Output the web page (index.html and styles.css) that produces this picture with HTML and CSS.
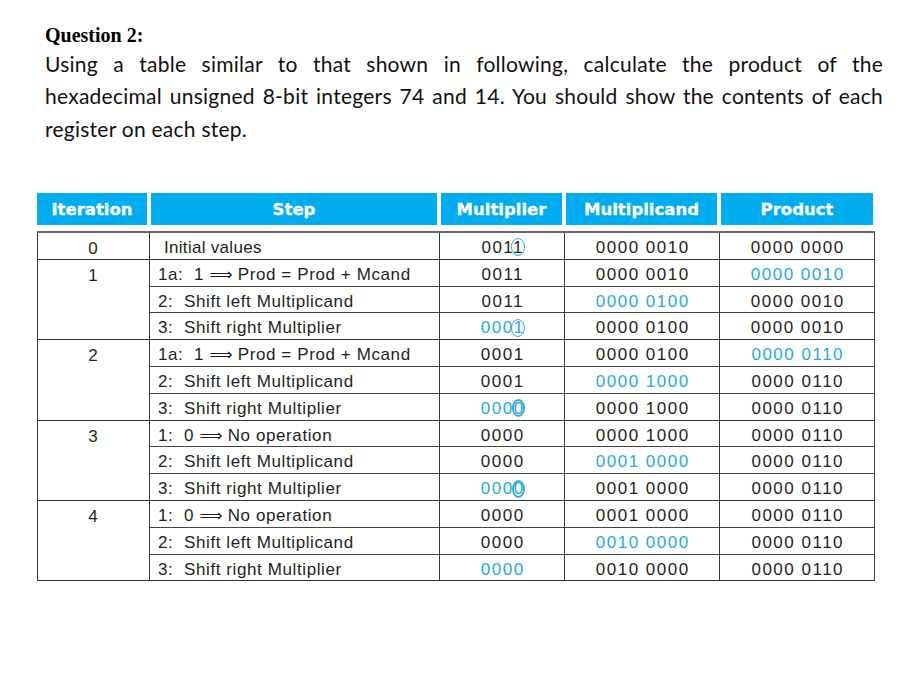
FILE: index.html
```html
<!DOCTYPE html>
<html lang="en">
<head>
<meta charset="utf-8">
<title>Question 2</title>
<link rel="stylesheet" href="styles.css">
</head>
<body>
<section class="question">
  <h2 class="q-title">Question 2:</h2>
  <p class="q-text">
    <span class="line">Using a table similar to that shown in following, calculate the product of the</span>
    <span class="line">hexadecimal unsigned 8-bit integers 74 and 14. You should show the contents of each</span>
    <span class="line line-last">register on each step.</span>
  </p>
</section>

<section class="sheet">
  <div class="head">
    <div class="hcell">Iteration</div>
    <div class="hcell">Step</div>
    <div class="hcell">Multiplier</div>
    <div class="hcell">Multiplicand</div>
    <div class="hcell">Product</div>
  </div>
  <table class="grid">
    <colgroup>
      <col class="c-it"><col class="c-step"><col class="c-mp"><col class="c-mc"><col class="c-pr">
    </colgroup>
    <tbody class="group">
      <tr>
        <td class="it">0</td>
        <td class="step step-init">Initial values</td>
        <td class="num">001<span class="ring">1</span></td>
        <td class="num">0000 0010</td>
        <td class="num">0000 0000</td>
      </tr>
    </tbody>
    <tbody class="group">
      <tr>
        <td class="it" rowspan="3">1</td>
        <td class="step">1a:&nbsp; 1 <span class="arr">⟹</span> Prod = Prod + Mcand</td>
        <td class="num">0011</td>
        <td class="num">0000 0010</td>
        <td class="num hi">0000 0010</td>
      </tr>
      <tr class="sub">
        <td class="step">2:&nbsp; Shift left Multiplicand</td>
        <td class="num">0011</td>
        <td class="num hi">0000 0100</td>
        <td class="num">0000 0010</td>
      </tr>
      <tr class="sub">
        <td class="step">3:&nbsp; Shift right Multiplier</td>
        <td class="num hi">000<span class="ring">1</span></td>
        <td class="num">0000 0100</td>
        <td class="num">0000 0010</td>
      </tr>
    </tbody>
    <tbody class="group">
      <tr>
        <td class="it" rowspan="3">2</td>
        <td class="step">1a:&nbsp; 1 <span class="arr">⟹</span> Prod = Prod + Mcand</td>
        <td class="num">0001</td>
        <td class="num">0000 0100</td>
        <td class="num hi">0000 0110</td>
      </tr>
      <tr class="sub">
        <td class="step">2:&nbsp; Shift left Multiplicand</td>
        <td class="num">0001</td>
        <td class="num hi">0000 1000</td>
        <td class="num">0000 0110</td>
      </tr>
      <tr class="sub">
        <td class="step">3:&nbsp; Shift right Multiplier</td>
        <td class="num hi">000<span class="ring ring-zero">0</span></td>
        <td class="num">0000 1000</td>
        <td class="num">0000 0110</td>
      </tr>
    </tbody>
    <tbody class="group">
      <tr>
        <td class="it" rowspan="3">3</td>
        <td class="step">1:&nbsp; 0 <span class="arr">⟹</span> No operation</td>
        <td class="num">0000</td>
        <td class="num">0000 1000</td>
        <td class="num">0000 0110</td>
      </tr>
      <tr class="sub">
        <td class="step">2:&nbsp; Shift left Multiplicand</td>
        <td class="num">0000</td>
        <td class="num hi">0001 0000</td>
        <td class="num">0000 0110</td>
      </tr>
      <tr class="sub">
        <td class="step">3:&nbsp; Shift right Multiplier</td>
        <td class="num hi">000<span class="ring ring-zero">0</span></td>
        <td class="num">0001 0000</td>
        <td class="num">0000 0110</td>
      </tr>
    </tbody>
    <tbody class="group">
      <tr>
        <td class="it" rowspan="3">4</td>
        <td class="step">1:&nbsp; 0 <span class="arr">⟹</span> No operation</td>
        <td class="num">0000</td>
        <td class="num">0001 0000</td>
        <td class="num">0000 0110</td>
      </tr>
      <tr class="sub">
        <td class="step">2:&nbsp; Shift left Multiplicand</td>
        <td class="num">0000</td>
        <td class="num hi">0010 0000</td>
        <td class="num">0000 0110</td>
      </tr>
      <tr class="sub">
        <td class="step">3:&nbsp; Shift right Multiplier</td>
        <td class="num hi">0000</td>
        <td class="num">0010 0000</td>
        <td class="num">0000 0110</td>
      </tr>
    </tbody>
  </table>
</section>
</body>
</html>
```

FILE: styles.css
```css
html, body {
  margin: 0;
  padding: 0;
  background: #ffffff;
}

body {
  width: 917px;
  color: #1a1a1a;
}

.question {
  width: 838px;
  padding: 24px 0 0 45px;
}

.q-title {
  margin: 0;
  font-family: "Liberation Serif", "Times New Roman", serif;
  font-weight: bold;
  font-size: 20px;
  line-height: 22px;
  color: #000;
}

.q-text {
  margin: 2px 0 0 0;
  font-family: Lato, "Open Sans", sans-serif;
  font-size: 21px;
  letter-spacing: 0.25px;
  word-spacing: -1px;
  line-height: 32.3px;
  color: #111;
}

.line {
  display: block;
  text-align: justify;
  text-align-last: justify;
}

.line-last {
  text-align-last: left;
  word-spacing: 0;
}

.sheet {
  width: 837px;
  margin: 48px 0 0 37px;
}

.head {
  display: grid;
  grid-template-columns: 112px 290px 125px 155px 155px;
  height: 32px;
  margin-bottom: 6px;
}

.hcell {
  margin: 0 2px;
  padding-top: 2px;
  background: #00adef;
  color: #ffffff;
  font-family: "DejaVu Sans", Verdana, sans-serif;
  font-weight: bold;
  font-size: 16.5px;
  -webkit-text-stroke: 0.3px #ffffff;
  display: flex;
  align-items: center;
  justify-content: center;
}

.hcell:first-child {
  margin-left: 0;
}

.hcell:last-child {
  margin-right: 1px;
}

.grid {
  width: 837px;
  table-layout: fixed;
  border-collapse: collapse;
  border-top: 2px solid #666;
  border-bottom: 1.5px solid #333;
  border-left: 1.5px solid #333;
  border-right: 1.5px solid #444;
}

.c-it { width: 112px; }
.c-step { width: 290px; }
.c-mp { width: 125px; }
.c-mc { width: 155px; }
.c-pr { width: 155px; }

.group + .group tr:first-child td {
  border-top: 1.5px solid #333;
}

.sub td {
  border-top: 1px solid #444;
}

.grid tr {
  height: 26.8px;
}

.grid td {
  padding: 4px 0 0 0;
  border-left: 1.5px solid #3a3a3a;
  font-family: "Liberation Sans", Arial, sans-serif;
  font-size: 17px;
  line-height: 20px;
  color: #231f20;
  vertical-align: middle;
}

.grid td.it {
  text-align: center;
  vertical-align: top;
  padding-top: 6px;
  border-left: 0;
  letter-spacing: 1px;
}

.grid td.step {
  padding-left: 8px;
  letter-spacing: 0.6px;
}

.grid td.step-init {
  padding-left: 14px;
  letter-spacing: 0.3px;
}

.arr {
  font-family: "DejaVu Sans", sans-serif;
  font-size: 16px;
  letter-spacing: 0;
}

.grid td.num {
  text-align: center;
  letter-spacing: 1.5px;
  padding-left: 1.5px;
}

.grid td.hi {
  color: #25a9e6;
}

.ring {
  position: relative;
}

.ring::after {
  content: "";
  position: absolute;
  left: -2.5px;
  top: 50%;
  width: 14px;
  height: 18px;
  margin-top: -9px;
  border: 1.5px solid #3aa7df;
  border-radius: 50%;
  box-sizing: border-box;
}

.ring-zero::after {
  left: -2px;
  width: 13px;
  border-width: 2px;
}
```
